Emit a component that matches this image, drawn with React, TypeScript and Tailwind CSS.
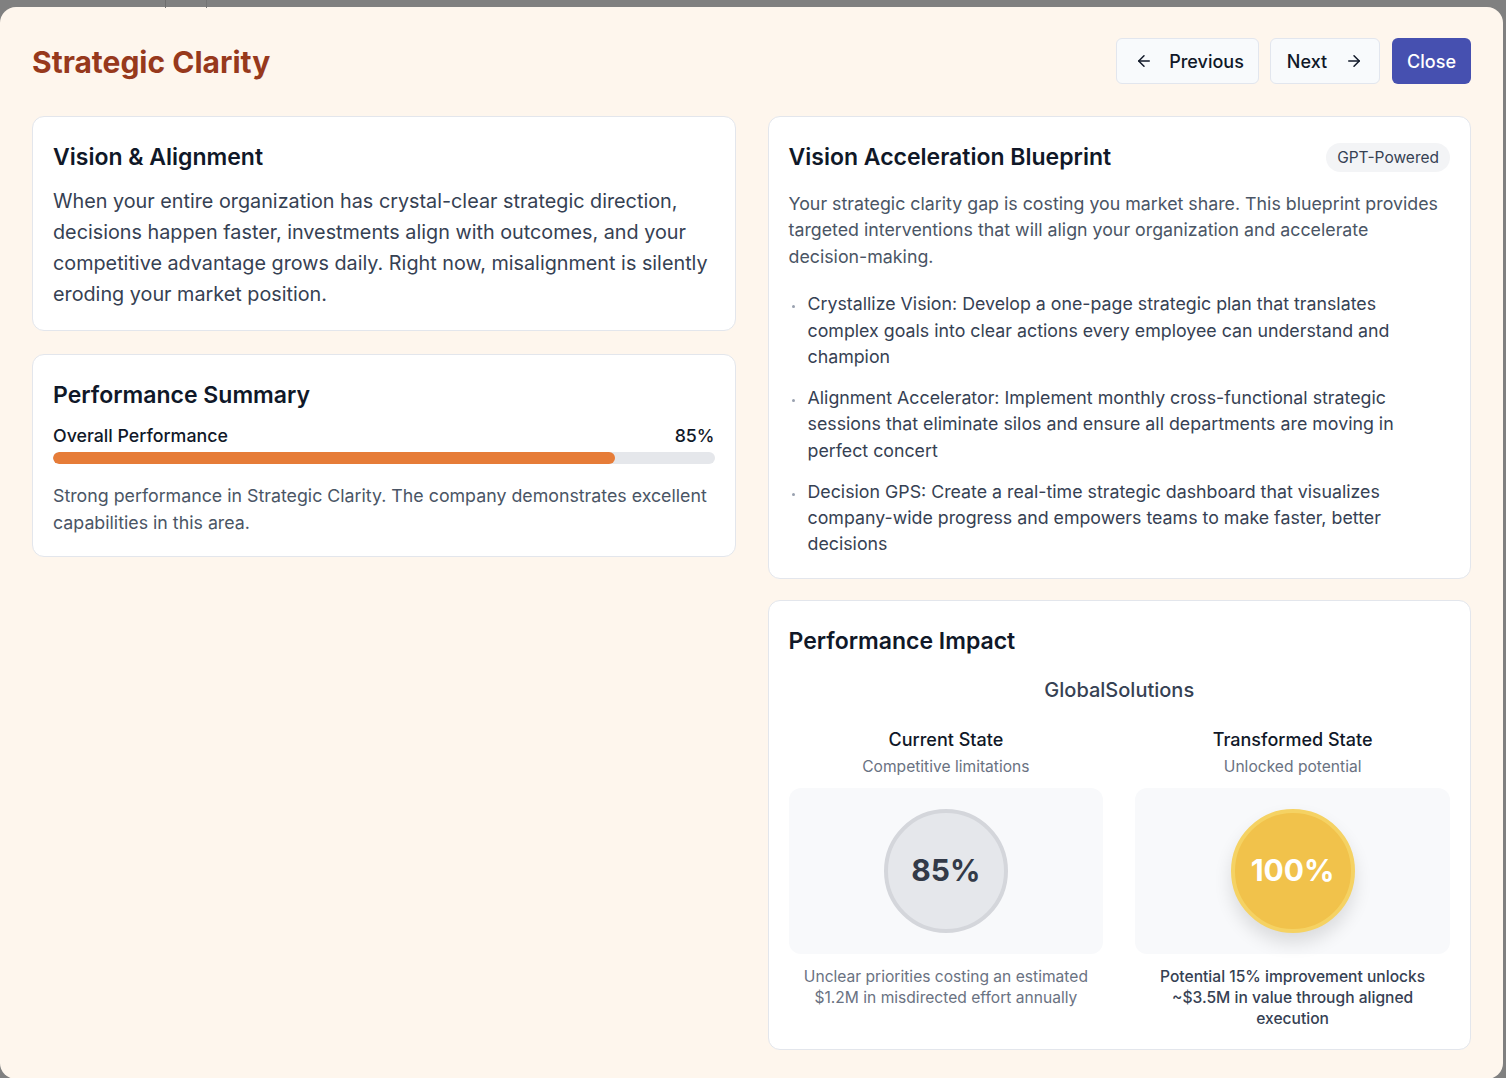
import { ArrowLeft, ArrowRight } from 'lucide-react';

const interventions = [
  'Crystallize Vision: Develop a one-page strategic plan that translates complex goals into clear actions every employee can understand and champion',
  'Alignment Accelerator: Implement monthly cross-functional strategic sessions that eliminate silos and ensure all departments are moving in perfect concert',
  'Decision GPS: Create a real-time strategic dashboard that visualizes company-wide progress and empowers teams to make faster, better decisions',
];

const Card = ({ children }: { children: React.ReactNode }) => (
  <div className="bg-white border border-[#e3e6ec] rounded-xl px-5 pt-[25px] pb-5">{children}</div>
);

const CardTitle = ({ children }: { children: React.ReactNode }) => (
  <h2 className="text-[23px] leading-[31px] font-semibold text-gray-900">{children}</h2>
);

const App = () => {
  const score = 85;

  return (
    <div
      className="relative min-h-screen bg-[#808080] overflow-hidden"
      style={{ fontFamily: 'Inter, "Noto Sans", sans-serif' }}
    >
      {/* backdrop seams behind the modal */}
      <div className="absolute top-0 left-[165px] w-px h-[8px] bg-[#6e6e6e]" />
      <div className="absolute top-0 left-[206px] w-px h-[8px] bg-[#747474]" />

      <div className="mt-[7px] w-[1503px] h-[1072px] bg-[#fef6ed] rounded-2xl px-8 pt-[31px]">
        <div className="flex items-center justify-between">
          <h1 className="text-[30px] leading-[44px] mt-[2px] font-bold text-[#97391c]">Strategic Clarity</h1>
          <div className="flex items-center">
            <button className="h-[46px] flex items-center gap-[16px] pl-[18px] pr-[14px] bg-[#f8fafc] border border-[#e2e6ee] rounded-md text-[18px] font-medium text-gray-900">
              <ArrowLeft className="w-[18px] h-[18px]" strokeWidth={2} />
              Previous
            </button>
            <button className="ml-[11px] h-[46px] flex items-center gap-[18px] px-[16px] bg-[#f8fafc] border border-[#e2e6ee] rounded-md text-[18px] font-medium text-gray-900">
              Next
              <ArrowRight className="w-[18px] h-[18px]" strokeWidth={2} />
            </button>
            <button className="ml-[12px] h-[46px] px-[15px] bg-[#4650b0] rounded-md text-[18px] font-medium text-white">
              Close
            </button>
          </div>
        </div>

        <div className="mt-[32px] grid grid-cols-2 gap-8 items-start">
          <div className="flex flex-col gap-[23px]">
            <Card>
              <CardTitle>Vision &amp; Alignment</CardTitle>
              <p className="mt-[13px] text-[19.8px] leading-[31px] text-gray-700">
                When your entire organization has crystal-clear strategic direction, decisions happen faster,
                investments align with outcomes, and your competitive advantage grows daily. Right now,
                misalignment is silently eroding your market position.
              </p>
            </Card>

            <Card>
              <CardTitle>Performance Summary</CardTitle>
              <div className="mt-[12px] flex items-center justify-between text-[17.8px] leading-[26.4px] font-medium text-gray-900">
                <span>Overall Performance</span>
                <span>{score}%</span>
              </div>
              <div className="mt-[3px] h-3 rounded-full bg-[#e5e7eb] overflow-hidden">
                <div className="h-full rounded-full bg-[#e67c38]" style={{ width: `${score}%` }} />
              </div>
              <p className="mt-[19px] text-[17.8px] leading-[26.4px] text-gray-600">
                Strong performance in Strategic Clarity. The company demonstrates excellent capabilities in this
                area.
              </p>
            </Card>
          </div>

          <div className="flex flex-col gap-[21px]">
            <Card>
              <div className="flex items-center justify-between">
                <CardTitle>Vision Acceleration Blueprint</CardTitle>
                <span className="px-[11px] py-[3px] rounded-full bg-gray-100 text-[15.5px] leading-[23px] text-gray-700">
                  GPT-Powered
                </span>
              </div>
              <p className="mt-[18px] text-[17.8px] leading-[26.4px] text-gray-600">
                Your strategic clarity gap is costing you market share. This blueprint provides targeted
                interventions that will align your organization and accelerate decision-making.
              </p>
              <ul className="mt-[21px] flex flex-col gap-[14.5px]">
                {interventions.map((item, index) => (
                  <li key={index} className="flex gap-[13px] text-[17.8px] leading-[26.4px] text-gray-700">
                    <span className="mt-[14px] ml-[3px] w-[3px] h-[3px] shrink-0 rounded-full bg-gray-400" />
                    <span>{item}</span>
                  </li>
                ))}
              </ul>
            </Card>

            <Card>
              <CardTitle>Performance Impact</CardTitle>
              <p className="mt-[18px] text-center text-[20px] leading-[31px] font-medium text-gray-700">
                GlobalSolutions
              </p>

              <div className="mt-[21px] grid grid-cols-2 gap-8">
                <div className="flex flex-col items-center">
                  <h3 className="text-[18px] leading-[26px] font-medium text-gray-900">Current State</h3>
                  <p className="mt-[3px] text-[15.6px] leading-[22px] text-gray-500">Competitive limitations</p>
                  <div className="mt-[10px] w-full h-[166px] rounded-xl bg-[#f8f9fb] flex items-center justify-center">
                    <div className="w-[124px] h-[124px] rounded-full bg-[#e5e7eb] border-[4px] border-[#d4d6db] flex items-center justify-center">
                      <span className="text-[30px] font-bold text-[#333a48]">85%</span>
                    </div>
                  </div>
                  <p className="mt-[12px] text-center text-[15.6px] leading-[21px] text-gray-500 px-2">
                    Unclear priorities costing an estimated $1.2M in misdirected effort annually
                  </p>
                </div>

                <div className="flex flex-col items-center">
                  <h3 className="text-[18px] leading-[26px] font-medium text-gray-900">Transformed State</h3>
                  <p className="mt-[3px] text-[15.6px] leading-[22px] text-gray-500">Unlocked potential</p>
                  <div className="mt-[10px] w-full h-[166px] rounded-xl bg-[#f8f9fb] flex items-center justify-center">
                    <div className="w-[124px] h-[124px] rounded-full bg-[#f1c24b] border-[4px] border-[#f5d263] shadow-[0_10px_18px_rgba(0,0,0,0.12)] flex items-center justify-center">
                      <span className="text-[30px] font-bold text-white">100%</span>
                    </div>
                  </div>
                  <p className="mt-[12px] text-center text-[15.6px] leading-[21px] font-medium text-gray-700 px-5">
                    Potential 15% improvement unlocks ~$3.5M in value through aligned execution
                  </p>
                </div>
              </div>
            </Card>
          </div>
        </div>
      </div>
    </div>
  );
};

export default App;
